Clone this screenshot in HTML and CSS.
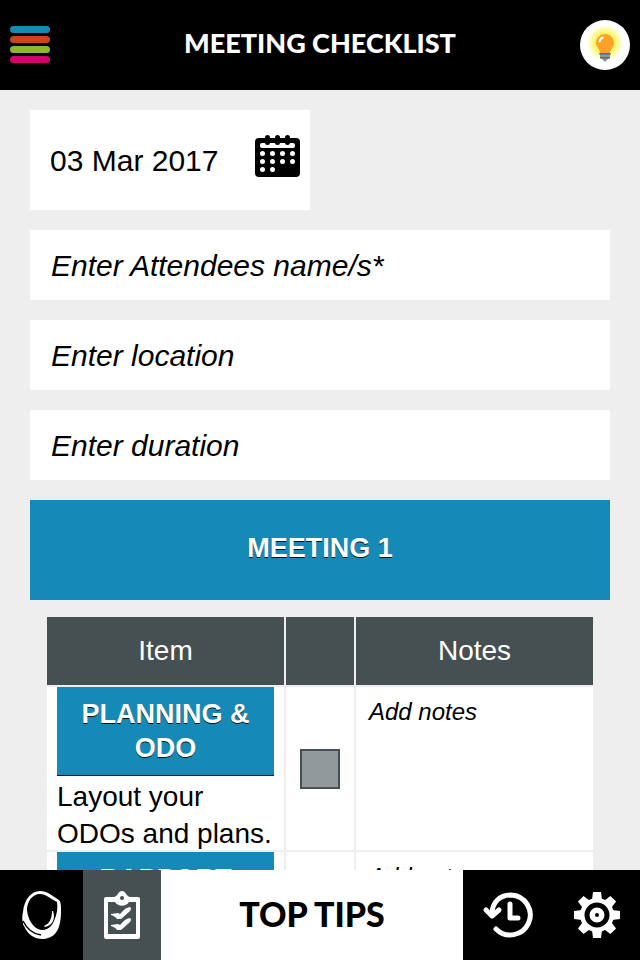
FILE: index.html
```html
<!DOCTYPE html>
<html lang="en">
<head>
    <meta charset="UTF-8">
    <meta name="viewport" content="width=device-width, initial-scale=1.0">
    <title>Meeting Checklist</title>
    <link rel="stylesheet" href="styles.css">
</head>
<body>
    <header class="header">
        <button type="button" class="menu-button" aria-label="Menu">
            <span class="bar blue"></span>
            <span class="bar orange"></span>
            <span class="bar green"></span>
            <span class="bar pink"></span>
        </button>
        <h1>MEETING CHECKLIST</h1>
        <button type="button" class="tip-button" aria-label="Tip">
            <svg width="50" height="50" viewBox="0 0 50 50">
                <defs>
                    <radialGradient id="glow">
                        <stop offset="0.5" stop-color="#fff45c"/>
                        <stop offset="0.75" stop-color="#fffa9c"/>
                        <stop offset="1" stop-color="#fff"/>
                    </radialGradient>
                </defs>
                <circle cx="25" cy="23" r="18" fill="url(#glow)"/>
                <path d="M25 14c-5 0-9 4-9 9 0 4 4 6 4 10h10c0-4 4-6 4-10 0-5-4-9-9-9z" fill="#ffa126"/>
                <path d="M19.500 21.500q.5-3 3.500-4" fill="none" stroke="#fff" stroke-width="2" stroke-linecap="round"/>
                <path d="M19.500 33h11v2h-.5v3h-1l-2 2-2 2-2-2-2-2h-1v-3h-.5z" fill="#8d979d"/>
                <path d="M19.500 33h11v1.500h-11zM20 37h10v1.500h-10z" fill="#5f6a70"/>
            </svg>
        </button>
    </header>

    <main class="content">
        <form class="form">
            <div class="date-box">
                <input type="text" class="date" value="03 Mar 2017" aria-label="Date">
                <svg class="calendar" width="45" height="42" viewBox="0 0 45 42">
                    <rect x="0" y="3" width="45" height="39" rx="4"/>
                    <rect x="5" y="8" width="35" height="5" rx="2" fill="#fff"/>
                    <g stroke="#000" stroke-width="5" stroke-linecap="round">
                        <path d="M12.500 2.500v5M22.500 2.500v5M32.500 2.500v5"/>
                    </g>
                    <g stroke="#fff" stroke-width="5" stroke-linecap="round">
                        <path d="M7.500 18.500h.01M17.500 18.500h.01M27.500 18.500h.01M37.500 18.500h.01"/>
                        <path d="M7.500 26.500h.01M17.500 26.500h.01M27.500 26.500h.01M37.500 26.500h.01"/>
                        <path d="M7.500 34.500h.01M17.500 34.500h.01"/>
                    </g>
                </svg>
            </div>
            <input type="text" class="field" placeholder="Enter Attendees name/s*" aria-label="Attendees">
            <input type="text" class="field" placeholder="Enter location" aria-label="Location">
            <input type="text" class="field" placeholder="Enter duration" aria-label="Duration">
            <button type="button" class="meeting">MEETING 1</button>

            <div class="table-wrap">
                <table class="checklist">
                    <thead>
                        <tr>
                            <th>Item</th>
                            <th class="check-col" aria-label="Done"></th>
                            <th>Notes</th>
                        </tr>
                    </thead>
                    <tbody>
                        <tr>
                            <td class="item">
                                <button type="button" class="item-title">PLANNING &amp; ODO</button>
                                <p>Layout your ODOs and plans.</p>
                            </td>
                            <td class="check"><input type="checkbox" aria-label="Planning and ODO done"></td>
                            <td class="notes"><textarea placeholder="Add notes" aria-label="Planning and ODO notes"></textarea></td>
                        </tr>
                        <tr>
                            <td class="item">
                                <button type="button" class="item-title">RAPPORT</button>
                            </td>
                            <td class="check"><input type="checkbox" aria-label="Rapport done"></td>
                            <td class="notes"><textarea placeholder="Add notes" aria-label="Rapport notes"></textarea></td>
                        </tr>
                    </tbody>
                </table>
            </div>
        </form>
    </main>

    <nav class="footer">
        <a href="#" aria-label="Home">
            <svg width="40" height="50" viewBox="0 0 40 50">
                <path fill="#fff" fill-rule="evenodd" d="M1 22C2 10 9 1 18 1c7 0 13 5 19 9 2 2 2 6 2 11 0 14-3 27-18 28C11 49 5 43 2 36c-1-1-1-2-1-3C0 30 0 26 1 22zM5 20c1 9 5 16 11 19 7 3 13-1 16-8 3-7 4-13 3-19C29 9 24 4 18 4 10 4 5 12 5 20z"/>
                <path d="M1 31c4 8 9 13 18 14" fill="none" stroke="#000" stroke-width="1.500"/>
                <path fill="#fff" d="M31 21c3 8-1 15-8 16l-1-1c5-2 8-7 8-15z"/>
            </svg>
        </a>
        <a href="#" class="active" aria-label="Checklist">
            <svg width="36" height="48" viewBox="0 0 36 48">
                <path fill="#fff" fill-rule="evenodd" d="M2 6h8c4-1 4-6 8-6s4 5 8 6h8q2 0 2 2v38q0 2-2 2H2q-2 0-2-2V8q0-2 2-2zM4 11v32h28V11h-7c-3 5-11 5-14 0z"/>
                <circle cx="18" cy="7" r="2" fill="#464f51"/>
                <path fill="#fff" d="M7 23l7-1 2 1c3-3 5-6 10-7l1 1c0 2-1 3-2 4-3 2-5 5-8 7h-4c-1-2-3-3-6-4z"/>
                <path fill="#fff" d="M7 34l7-1 2 1c3-3 5-6 10-7l1 1c0 2-1 3-2 4-3 2-5 5-8 7h-4c-1-2-3-3-6-4z"/>
            </svg>
        </a>
        <a href="#" class="top-tips">TOP TIPS</a>
        <a href="#" aria-label="History">
            <svg width="52" height="46" viewBox="0 0 52 46" fill="none" stroke="#fff" stroke-width="5" stroke-linecap="round" stroke-linejoin="round">
                <path d="M10 22C10 10 18 3 29 3a20 20 0 1 1-15 34"/>
                <path d="M4 18l6 6 7-6-7 6z"/>
                <path d="M28 12v14h8"/>
            </svg>
        </a>
        <a href="#" aria-label="Settings">
            <svg width="46" height="46" viewBox="0 0 46 46">
                <g fill="#fff">
                    <circle cx="23" cy="23" r="17"/>
                    <path id="tooth" d="M18 8l1-8h8l1 8v30l-1 8h-8l-1-8z"/>
                    <use href="#tooth" transform="rotate(45 23 23)"/>
                    <use href="#tooth" transform="rotate(90 23 23)"/>
                    <use href="#tooth" transform="rotate(135 23 23)"/>
                </g>
                <circle cx="23" cy="23" r="10" fill="none" stroke="#000" stroke-width="5"/>
                <circle cx="23" cy="23" r="2" fill="#000"/>
            </svg>
        </a>
    </nav>
</body>
</html>
```
FILE: styles.css
```css
* {
    box-sizing: border-box;
}

body {
    display: flex;
    flex-direction: column;
    height: 100vh;
    margin: 0;
    background-color: #eee;
    color: #000;
    font-family: "Helvetica Neue", "Liberation Sans", Arial, sans-serif;
}

button,
input,
textarea {
    margin: 0;
    padding: 0;
    border: 0;
    border-radius: 0;
    background: none;
    color: inherit;
    font-family: inherit;
}

svg {
    display: block;
}

.header {
    display: grid;
    flex: none;
    grid-template-columns: 50px 1fr 50px;
    align-items: center;
    height: 90px;
    padding: 0 10px;
    background-color: #000;
    color: #fff;
}

.header h1 {
    margin: 0;
    padding-bottom: 4px;
    font-family: Lato, sans-serif;
    font-size: 27px;
    font-weight: 900;
    line-height: 36px;
    text-align: center;
}

.menu-button {
    display: flex;
    flex-direction: column;
    gap: 3px;
    width: 40px;
    padding-bottom: 2px;
}

.bar {
    height: 7px;
    border-radius: 4px;
}

.blue {
    background-color: #158ab7;
}

.orange {
    background-color: #ca4518;
}

.green {
    background-color: #8fb72a;
}

.pink {
    background-color: #d6006d;
}

.tip-button {
    border-radius: 50%;
    background-color: #fff;
}

.content {
    flex: 1;
    min-height: 0;
    overflow-y: auto;
    scrollbar-width: none;
}

.form {
    display: flex;
    flex-direction: column;
    gap: 20px;
    padding: 20px 30px;
}

.date-box {
    display: flex;
    align-items: center;
    justify-content: space-between;
    width: 280px;
    height: 100px;
    padding: 0 10px 0 20px;
    background-color: #fff;
}

.date {
    width: 180px;
    padding-top: 2px;
    font-size: 30px;
}

.calendar {
    margin-bottom: 8px;
}

.field {
    height: 70px;
    padding: 2px 21px 0;
    background-color: #fff;
    font-size: 30px;
}

::placeholder {
    color: #000;
    font-style: italic;
    opacity: 1;
}

.meeting,
.item-title {
    background-color: #158ab7;
    color: #fff;
    font-size: 27px;
    font-weight: bold;
    line-height: 34px;
    text-shadow: 0 1px 0 #111;
}

.meeting {
    height: 100px;
    padding-bottom: 4px;
}

.table-wrap {
    margin-top: -5px;
    padding: 0 15px;
}

.checklist {
    width: 100%;
    border-spacing: 2px;
    table-layout: fixed;
    font-size: 28px;
}

.checklist th {
    height: 68px;
    padding: 0;
    background-color: #464f51;
    color: #fff;
    font-weight: normal;
}

.checklist .check-col {
    width: 68px;
}

.checklist td {
    height: 163px;
    padding: 0;
    background-color: #fff;
}

.checklist .item {
    padding: 0 10px;
    vertical-align: top;
}

.item-title {
    display: block;
    width: 100%;
    padding: 10px;
    border-bottom: 1px solid #111;
}

.item p {
    margin: 2px 0 -2px;
    line-height: 37px;
}

.check {
    text-align: center;
}

.check input {
    display: block;
    width: 40px;
    height: 40px;
    margin: 0 auto;
    appearance: none;
    border: 2px solid #464f51;
    background-color: #92999b;
}

.check input:checked {
    background-color: #158ab7;
}

.checklist .notes {
    padding: 10px;
    vertical-align: top;
}

.notes textarea {
    display: block;
    width: 100%;
    height: 80px;
    padding: 0 3px;
    font-size: 24px;
    line-height: 30px;
    resize: none;
}

.footer {
    display: grid;
    flex: none;
    grid-template-columns: 83fr 78fr 302fr 90fr 87fr;
    height: 90px;
    background-color: #000;
}

.footer a {
    display: flex;
    align-items: center;
    justify-content: center;
    text-decoration: none;
}

.footer .active {
    background-color: #464f51;
}

.footer .top-tips {
    padding-bottom: 4px;
    background-color: #fff;
    color: #000;
    font-family: Lato, sans-serif;
    font-size: 34px;
    font-weight: 900;
}
```
